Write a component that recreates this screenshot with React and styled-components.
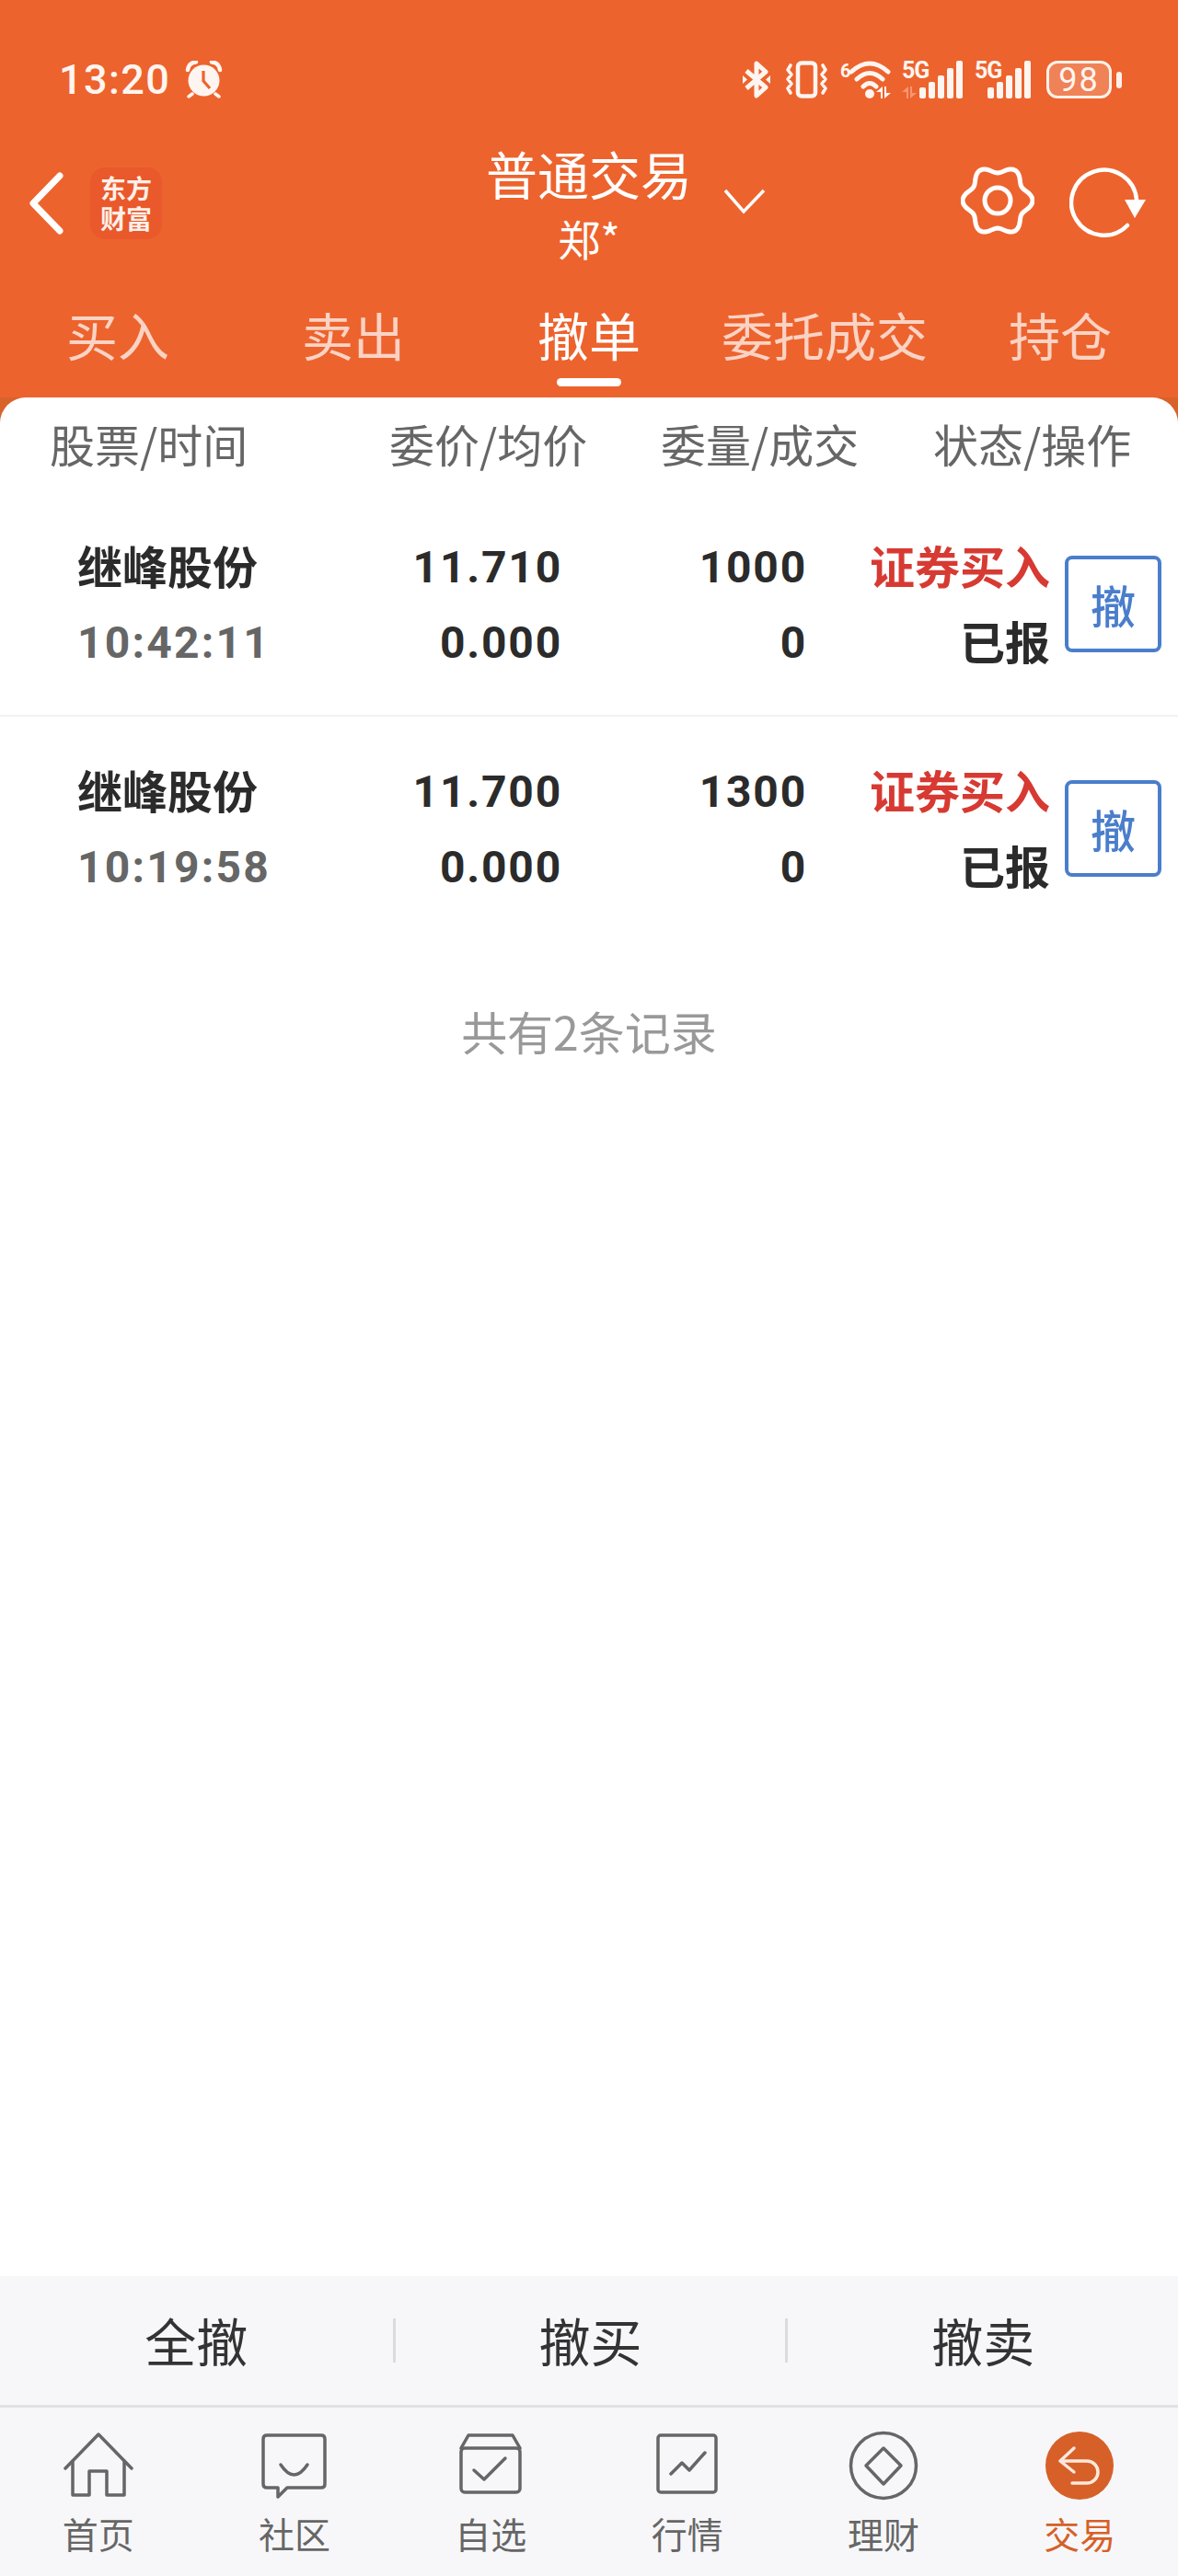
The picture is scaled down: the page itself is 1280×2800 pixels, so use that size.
import React from "react";
import styled, { createGlobalStyle } from "styled-components";

const CJK = `"Noto Sans CJK SC", "Noto Sans", sans-serif`;
const NUM = `Roboto, "Noto Sans CJK SC", sans-serif`;

const Global = createGlobalStyle`
  html, body {
    margin: 0;
    padding: 0;
    background: #fff;
  }
  * {
    box-sizing: border-box;
  }
`;

const Page = styled.div`
  width: 1280px;
  height: 2800px;
  display: flex;
  flex-direction: column;
  font-family: ${CJK};
  overflow: hidden;
`;

const Header = styled.header`
  background: #ed632d;
  color: #fff;
`;

const StatusBar = styled.div`
  height: 154px;
  padding: 66px 61px 0 64px;
  display: flex;
  justify-content: space-between;
  align-items: flex-start;
`;

const Clock = styled.div`
  display: flex;
  align-items: center;
  gap: 16px;
  height: 41px;
  font-family: ${NUM};
  font-size: 45px;
  font-weight: 500;
  letter-spacing: 1.4px;
  color: #fff5f0;
`;

const StatusIcons = styled.div`
  display: flex;
  align-items: flex-start;
  height: 41px;
  svg {
    display: block;
  }
`;

const Slot = styled.div`
  position: relative;
  margin-left: ${(p) => p.$gap || 0}px;
  width: ${(p) => p.$w}px;
  height: 41px;
  display: flex;
  justify-content: flex-end;
`;

const TinyLabel = styled.span`
  position: absolute;
  left: 0;
  top: -3px;
  font-family: ${NUM};
  font-size: ${(p) => p.$size || 25}px;
  line-height: 28px;
  font-weight: 700;
  letter-spacing: -1px;
  color: #fff5f0;
`;

const Battery = styled.div`
  margin-left: 17px;
  width: 71px;
  height: 41px;
  border: 3.5px solid #fff1ea;
  border-radius: 12px;
  background: rgba(255, 255, 255, 0.2);
  display: flex;
  align-items: center;
  justify-content: center;
  font-family: ${NUM};
  font-size: 36px;
  letter-spacing: 2px;
  color: #fff5f0;
`;

const BatteryTip = styled.i`
  display: block;
  margin: 12px 0 0 5px;
  width: 6px;
  height: 18px;
  border-radius: 3px;
  background: #fff1ea;
`;

const Nav = styled.div`
  height: 142px;
  display: grid;
  grid-template-columns: 1fr auto 1fr;
`;

const NavLeft = styled.div`
  display: flex;
  align-items: center;
  padding: 28px 0 0 30px;
  height: 105px;
`;

const Logo = styled.div`
  margin-left: 28px;
  width: 78px;
  height: 78px;
  border-radius: 16px;
  background: #e9592c;
  display: flex;
  flex-direction: column;
  justify-content: center;
  align-items: center;
  font-family: "Noto Sans CJK SC", sans-serif;
  font-size: 28px;
  line-height: 33px;
  font-weight: 700;
  color: #fff0e8;
`;

const Title = styled.div`
  text-align: center;
`;

const TitleMain = styled.div`
  font-size: 56px;
  line-height: 68px;
  white-space: nowrap;
`;

const TitleSub = styled.div`
  font-size: 46px;
  line-height: 72px;
`;

const NavRight = styled.div`
  display: flex;
  align-items: flex-start;
  padding-right: 34px;
`;

const DownArrow = styled.svg`
  margin: 50px 0 0 34px;
`;

const Gear = styled.svg`
  margin: 24px 0 0 auto;
`;

const Refresh = styled.svg`
  margin: 27px 0 0 38px;
`;

const Tabs = styled.nav`
  height: 136px;
  display: grid;
  grid-template-columns: repeat(5, 1fr);
`;

const Tab = styled.div`
  position: relative;
  text-align: center;
  font-size: 56px;
  line-height: 134px;
  color: ${(p) => (p.$active ? "#fff" : "rgba(255,255,255,0.72)")};
  &::after {
    content: "";
    display: ${(p) => (p.$active ? "block" : "none")};
    position: absolute;
    left: 50%;
    bottom: 12px;
    width: 70px;
    height: 9px;
    margin-left: -35px;
    border-radius: 5px;
    background: #fff;
  }
`;

const Body = styled.main`
  flex: 1;
  background: #d9622b;
  display: flex;
`;

const Card = styled.div`
  flex: 1;
  background: #fff;
  border-radius: 28px 28px 0 0;
`;

const TableHead = styled.div`
  height: 104px;
  padding: 0 0 6px 54px;
  display: grid;
  grid-template-columns: 369px 295px 296px 1fr;
  align-items: center;
  font-size: 49px;
  color: #666;
  white-space: nowrap;
`;

const Row = styled.div`
  height: 243px;
  padding-left: 84px;
  display: grid;
  grid-template-columns: 300px 227px 266px 264px 121px;
  grid-template-rows: 82px 82px;
  align-content: center;
  align-items: center;
  border-bottom: ${(p) => (p.$last ? "none" : "2px solid #f2f2f2")};
`;

const Name = styled.div`
  padding-bottom: 5px;
  font-size: 49px;
  font-weight: 700;
  color: #2b2b2b;
`;

const Time = styled.div`
  padding-top: 2px;
  font-family: ${NUM};
  font-size: 48px;
  font-weight: 700;
  letter-spacing: 2.2px;
  color: #666;
`;

const Num = styled.div`
  padding-top: 2px;
  text-align: right;
  font-family: ${NUM};
  font-size: 48px;
  font-weight: 700;
  letter-spacing: 1.8px;
  color: #2b2b2b;
`;

const State = styled.div`
  padding-bottom: 5px;
  text-align: right;
  font-size: 49px;
  font-weight: 700;
  color: ${(p) => (p.$buy ? "#d73a32" : "#2b2b2b")};
`;

const CancelBtn = styled.button`
  grid-column: 5;
  grid-row: 1 / 3;
  justify-self: end;
  width: 105px;
  height: 105px;
  padding: 0;
  border: 4px solid #4a7ecb;
  border-radius: 8px;
  background: #fff;
  font-family: ${CJK};
  font-size: 49px;
  font-weight: 500;
  color: #4a7ecb;
`;

const Summary = styled.div`
  margin-top: 66px;
  text-align: center;
  font-size: 50px;
  line-height: 64px;
  color: #999;
`;

const ActionBar = styled.div`
  height: 143px;
  border-bottom: 3px solid #e2e2e4;
  background: #f7f7f9;
  display: grid;
  grid-template-columns: repeat(3, 1fr);
  align-items: center;
`;

const Action = styled.div`
  height: 48px;
  line-height: 46px;
  text-align: center;
  font-size: 56px;
  color: #333;
  border-left: ${(p) => (p.$first ? "none" : "3px solid #dcdcde")};
`;

const TabBar = styled.div`
  height: 183px;
  padding-top: 25px;
  background: #f7f7f9;
  display: grid;
  grid-template-columns: repeat(6, 1fr);
`;

const TabItem = styled.div`
  display: flex;
  flex-direction: column;
  align-items: center;
  font-size: 39px;
  line-height: 40px;
  color: ${(p) => (p.$active ? "#d66028" : "#666")};
  svg {
    display: block;
    margin-bottom: 15px;
  }
`;

const ArrowSpot = styled.div`
  position: absolute;
  left: ${(p) => p.$left}px;
  top: 28px;
  svg {
    display: block;
  }
`;

const gearPath = () => {
  let d = "";
  for (let i = 0; i <= 120; i++) {
    const a = (i / 120) * Math.PI * 2;
    const r = 34 + 4 * Math.cos(6 * a);
    d += `${i ? "L" : "M"}${(40 + r * Math.cos(a)).toFixed(2)} ${(40 + r * Math.sin(a)).toFixed(2)}`;
  }
  return d + "Z";
};

const line = { fill: "none", stroke: "#666", strokeWidth: 3.5, strokeLinejoin: "round", strokeLinecap: "round" };

const tabIcons = {
  home: (
    <g {...line}>
      <path d="M2 41 L38 4 L74 41" />
      <path d="M10 33 V70 H28 V44 H47 V70 H66 V33" />
    </g>
  ),
  chat: (
    <g {...line}>
      <path d="M8 5 H67 Q71 5 71 9 V58 Q71 62 67 62 H30 L20 72 V62 H8 Q4 62 4 58 V9 Q4 5 8 5Z" />
      <path d="M23 37 Q37.5 59 52 37" />
    </g>
  ),
  box: (
    <g {...line}>
      <path d="M6 19 L14 5 H62 L70 19" />
      <rect x="6" y="19" width="64" height="48" rx="4" />
      <path d="M20 43 L31 53 L54 30" />
    </g>
  ),
  chart: (
    <g {...line}>
      <rect x="6" y="5" width="63" height="62" rx="3" />
      <path d="M20 47 L32 35 L40 43 L57 24" />
    </g>
  ),
  money: (
    <g {...line}>
      <circle cx="38" cy="38" r="35.5" />
      <path d="M38 19 L57 38 L38 58 L19 38Z" />
    </g>
  ),
  trade: (
    <g>
      <circle cx="38" cy="38" r="37" fill="#d66028" />
      <path
        d="M32 19 L17 33 L32 45 M17 33 H46 A12 12 0 0 1 46 57 H30"
        fill="none"
        stroke="#fbe8dc"
        strokeWidth="3.5"
        strokeLinecap="round"
        strokeLinejoin="round"
      />
    </g>
  ),
};

const BARS = [
  [0, 29, 12],
  [10, 23, 18],
  [20, 16, 25],
  [30, 8, 33],
  [40, 0, 41],
];

function SignalBars() {
  return (
    <svg width="47" height="41" viewBox="0 0 47 41">
      {BARS.map(([x, y, h]) => (
        <rect key={x} x={x} y={y} width="7" height={h} rx="2" fill="#fff5f0" />
      ))}
    </svg>
  );
}

function DataArrows({ color = "#fff5f0" }) {
  return (
    <svg width="16" height="13" viewBox="0 0 16 13">
      <path d="M7 0 V13 H5 V6 H0Z M9 13 V0 H11 V7 H16Z" fill={color} />
    </svg>
  );
}

const rows = [
  { name: "继峰股份", time: "10:42:11", price: "11.710", avg: "0.000", qty: "1000", done: "0" },
  { name: "继峰股份", time: "10:19:58", price: "11.700", avg: "0.000", qty: "1300", done: "0" },
];

const tabs = [
  { key: "home", label: "首页" },
  { key: "chat", label: "社区" },
  { key: "box", label: "自选" },
  { key: "chart", label: "行情" },
  { key: "money", label: "理财" },
  { key: "trade", label: "交易", active: true },
];

function App() {
  return (
    <Page>
      <Global />
      <Header>
        <StatusBar>
          <Clock>
            13:20
            <svg width="41" height="41" viewBox="0 0 41 41">
              <circle cx="20.5" cy="21.5" r="17" fill="#fff5f0" />
              <path d="M3 10 Q4 2 12 1.5 M38 10 Q37 2 29 1.5" fill="none" stroke="#fff5f0" strokeWidth="4.5" strokeLinecap="round" />
              <path d="M8 36 L4 39 M33 36 L37 39" stroke="#fff5f0" strokeWidth="3.5" strokeLinecap="round" />
              <path d="M20 11 V22 L27 30" fill="none" stroke="#ed632d" strokeWidth="3.2" />
            </svg>
          </Clock>
          <StatusIcons>
            <svg width="30" height="41" viewBox="0 0 30 41">
              <path d="M4 11 L25 29 L15 38 V3 L25 12 L4 30" fill="none" stroke="#fff5f0" strokeWidth="5" strokeLinejoin="round" />
              <path d="M0 16 L5 20.5 L0 25Z M30 16 L25 20.5 L30 25Z" fill="#fff5f0" />
            </svg>
            <Slot $w={47} $gap={16}>
              <svg width="47" height="41" viewBox="0 0 47 41">
                <rect x="14" y="2.5" width="19" height="36" rx="4" fill="none" stroke="#fff5f0" strokeWidth="4.5" />
                <path
                  d="M6 5 L3 10 L7 15 L3 20 L7 25 L3 30 L6 35 M41 5 L44 10 L40 15 L44 20 L40 25 L44 30 L41 35"
                  fill="none"
                  stroke="#fff5f0"
                  strokeWidth="3.6"
                  strokeLinecap="round"
                  strokeLinejoin="round"
                />
              </svg>
            </Slot>
            <Slot $w={55} $gap={13}>
              <TinyLabel $size={20}>6</TinyLabel>
              <svg width="55" height="41" viewBox="0 0 55 41">
                <path d="M12 12 Q32 -6 52 12 M18 20 Q32 7 46 20 M25 28 Q32 21 39 28" fill="none" stroke="#fff5f0" strokeWidth="5" strokeLinecap="round" />
                <circle cx="32" cy="36" r="5" fill="#fff5f0" />
              </svg>
              <ArrowSpot $left={39}>
                <DataArrows />
              </ArrowSpot>
            </Slot>
            <Slot $w={66} $gap={12}>
              <SignalBars />
              <TinyLabel>5G</TinyLabel>
              <ArrowSpot $left={0}>
                <DataArrows color="#f69673" />
              </ArrowSpot>
            </Slot>
            <Slot $w={61} $gap={13}>
              <SignalBars />
              <TinyLabel>5G</TinyLabel>
            </Slot>
            <Battery>98</Battery>
            <BatteryTip />
          </StatusIcons>
        </StatusBar>

        <Nav>
          <NavLeft>
            <svg width="40" height="70" viewBox="0 0 40 70">
              <path d="M35 5 L6 35 L35 65" fill="none" stroke="#fff" strokeWidth="7" strokeLinecap="round" strokeLinejoin="round" />
            </svg>
            <Logo>
              <span>东方</span>
              <span>财富</span>
            </Logo>
          </NavLeft>
          <Title>
            <TitleMain>普通交易</TitleMain>
            <TitleSub>郑*</TitleSub>
          </Title>
          <NavRight>
            <DownArrow width="46" height="30" viewBox="0 0 46 30">
              <path d="M2 3 L22 26 L44 3" fill="none" stroke="#fff" strokeWidth="3.5" />
            </DownArrow>
            <Gear width="80" height="80" viewBox="0 0 80 80">
              <path d={gearPath()} fill="none" stroke="#fff" strokeWidth="5" strokeLinejoin="round" />
              <circle cx="40" cy="40" r="14" fill="none" stroke="#fff" strokeWidth="5" />
            </Gear>
            <Refresh width="84" height="78" viewBox="0 0 84 78">
              <path d="M73 36 A35.5 35.5 0 1 0 63 64" fill="none" stroke="#fff" strokeWidth="4.5" strokeLinecap="round" />
              <path d="M60 36 H83 L71 56Z" fill="#fff" />
            </Refresh>
          </NavRight>
        </Nav>

        <Tabs>
          <Tab>买入</Tab>
          <Tab>卖出</Tab>
          <Tab $active>撤单</Tab>
          <Tab>委托成交</Tab>
          <Tab>持仓</Tab>
        </Tabs>
      </Header>

      <Body>
        <Card>
          <TableHead>
            <span>股票/时间</span>
            <span>委价/均价</span>
            <span>委量/成交</span>
            <span>状态/操作</span>
          </TableHead>
          {rows.map((r, i) => (
            <Row key={r.time} $last={i === rows.length - 1}>
              <Name>{r.name}</Name>
              <Num>{r.price}</Num>
              <Num>{r.qty}</Num>
              <State $buy>证券买入</State>
              <CancelBtn>撤</CancelBtn>
              <Time>{r.time}</Time>
              <Num>{r.avg}</Num>
              <Num>{r.done}</Num>
              <State>已报</State>
            </Row>
          ))}
          <Summary>共有2条记录</Summary>
        </Card>
      </Body>

      <ActionBar>
        <Action $first>全撤</Action>
        <Action>撤买</Action>
        <Action>撤卖</Action>
      </ActionBar>

      <TabBar>
        {tabs.map((t) => (
          <TabItem key={t.key} $active={t.active}>
            <svg width="76" height="76" viewBox="0 0 76 76">
              {tabIcons[t.key]}
            </svg>
            {t.label}
          </TabItem>
        ))}
      </TabBar>
    </Page>
  );
}

export default App;
